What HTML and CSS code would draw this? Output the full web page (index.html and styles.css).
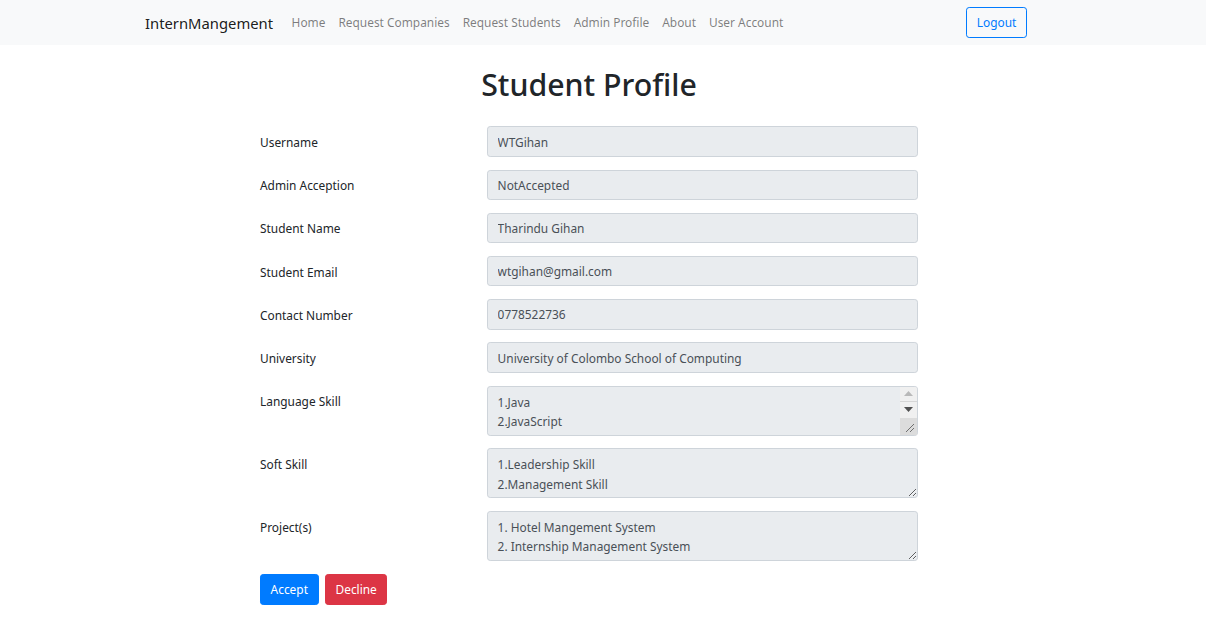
FILE: index.html
```html
<!DOCTYPE html>
<html lang="en">
<head>
<meta charset="utf-8">
<title>Student Profile</title>
<link rel="stylesheet" href="styles.css">
</head>
<body>
<nav class="navbar">
  <div class="nav-inner">
    <a class="brand" href="#">InternMangement</a>
    <ul class="nav-links">
      <li><a href="#">Home</a></li>
      <li><a href="#">Request Companies</a></li>
      <li><a href="#">Request Students</a></li>
      <li><a href="#">Admin Profile</a></li>
      <li><a href="#">About</a></li>
      <li><a href="#">User Account</a></li>
    </ul>
    <button class="btn btn-outline">Logout</button>
  </div>
</nav>
<main class="main">
  <h1 class="title">Student Profile</h1>
  <form class="form">
    <div class="row"><label class="label">Username</label><input class="field" readonly value="WTGihan"></div>
    <div class="row"><label class="label">Admin Acception</label><input class="field" readonly value="NotAccepted"></div>
    <div class="row"><label class="label">Student Name</label><input class="field" readonly value="Tharindu Gihan"></div>
    <div class="row"><label class="label">Student Email</label><input class="field" readonly value="wtgihan@gmail.com"></div>
    <div class="row"><label class="label">Contact Number</label><input class="field" readonly value="0778522736"></div>
    <div class="row"><label class="label">University</label><input class="field" readonly value="University of Colombo School of Computing"></div>
    <div class="row"><label class="label">Language Skill</label>
      <div class="area-wrap">
        <textarea class="field area" rows="2" readonly>1.Java
2.JavaScript</textarea>
        <div class="fake-scroll" aria-hidden="true">
          <div class="sb-btn sb-up"><svg width="9" height="5" viewBox="0 0 9 5"><path d="M0 5 L4.5 0 L9 5 Z" fill="#b9b9b9"/></svg></div>
          <div class="sb-btn sb-down"><svg width="9" height="5" viewBox="0 0 9 5"><path d="M0 0 L9 0 L4.5 5 Z" fill="#505050"/></svg></div>
          <div class="sb-corner"><svg width="11" height="11" viewBox="0 0 11 11"><path d="M2 10 L10 2 M6 10 L10 6" stroke="#6f6f6f" stroke-width="1" fill="none"/></svg></div>
        </div>
      </div>
    </div>
    <div class="row"><label class="label">Soft Skill</label><textarea class="field area" rows="2" readonly>1.Leadership Skill
2.Management Skill</textarea></div>
    <div class="row"><label class="label">Project(s)</label><textarea class="field area" rows="2" readonly>1. Hotel Mangement System
2. Internship Management System</textarea></div>
    <div class="actions">
      <button type="button" class="btn btn-primary">Accept</button>
      <button type="button" class="btn btn-danger">Decline</button>
    </div>
  </form>
</main>
</body>
</html>
```
FILE: styles.css
```css
* { box-sizing: border-box; }
html, body { margin: 0; padding: 0; }
body {
  font-family: "Noto Sans", "Segoe UI", Arial, sans-serif;
  font-size: 11.9px;
  line-height: 19.2px;
  color: #212529;
  background: #fff;
}
.navbar {
  background: #f8f9fa;
  height: 45px;
}
.nav-inner {
  height: 45px;
  display: flex;
  align-items: center;
  padding-left: 145px;
  padding-right: 179px;
}
.brand {
  font-size: 14.8px;
  line-height: 24px;
  color: rgba(0,0,0,.9);
  text-decoration: none;
  margin-right: 12px;
}
.nav-links {
  list-style: none;
  display: flex;
  margin: 0;
  padding: 0;
  flex: 1;
}
.nav-links a {
  display: block;
  padding: 6.4px 6.5px;
  color: rgba(0,0,0,.5);
  text-decoration: none;
}
.btn {
  font-family: inherit;
  font-size: 11.9px;
  line-height: 19.2px;
  padding: 5px 9.6px;
  border-radius: 3.2px;
  border: 1px solid transparent;
  cursor: pointer;
}
.btn-outline {
  background: transparent;
  color: #007bff;
  border-color: #007bff;
}
.btn-primary { background: #007bff; border-color: #007bff; color: #fff; }
.btn-danger { background: #dc3545; border-color: #dc3545; color: #fff; }
.main {
  width: 658px;
  margin-left: 260px;
  padding-top: 21px;
}
.title {
  margin: 0 0 22px;
  font-size: 30.3px;
  font-weight: 500;
  line-height: 38.4px;
  text-align: center;
}
.row {
  display: flex;
  align-items: flex-start;
  margin-bottom: 12.8px;
}
.label {
  width: 227px;
  flex: none;
  padding-top: 6.6px;
  padding-bottom: 4.6px;
}
.field {
  flex: 1;
  display: block;
  width: 100%;
  font-family: inherit;
  font-size: 11.9px;
  line-height: 19.2px;
  height: 30.4px;
  padding: 5px 9.6px;
  color: #495057;
  background: #e9ecef;
  border: 1px solid #ced4da;
  border-radius: 3.2px;
  outline: none;
}
.area {
  height: 50px;
  padding-top: 6px;
  resize: vertical;
  overflow: hidden;
}
.area-wrap {
  flex: 1;
  position: relative;
}
.fake-scroll {
  position: absolute;
  top: 1px;
  right: 1px;
  bottom: 1px;
  width: 17px;
  display: flex;
  flex-direction: column;
  background: #f0f0f0;
  border-radius: 0 2px 2px 0;
}
.sb-btn {
  height: 15px;
  display: flex;
  align-items: center;
  justify-content: center;
}
.sb-up { border-bottom: 1px solid #d6d6d6; }
.sb-corner {
  margin-top: auto;
  height: 17px;
  background: #dcdcdc;
  display: flex;
  align-items: flex-end;
  justify-content: flex-end;
  padding: 0 2px 2px 0;
}
.actions {
  display: flex;
  gap: 6.4px;
}
```
